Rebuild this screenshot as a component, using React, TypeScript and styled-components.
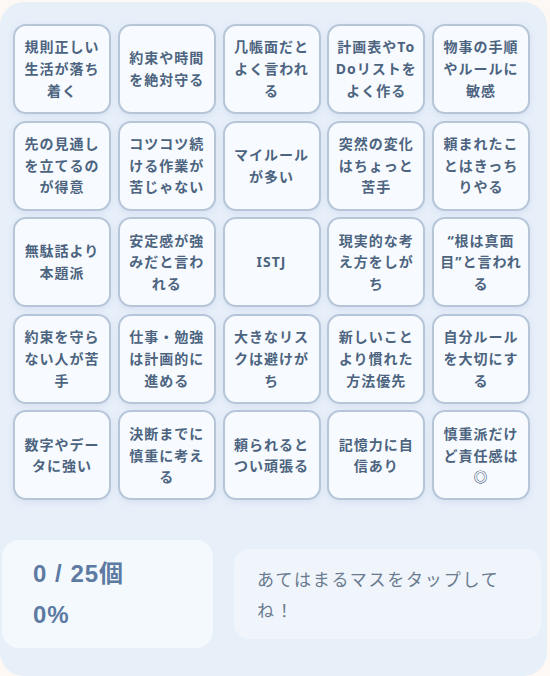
import styled, { createGlobalStyle } from "styled-components";

const GlobalStyle = createGlobalStyle`
  html, body {
    margin: 0;
    padding: 0;
    background: #fdf8f4;
  }
  body {
    font-family: "Noto Sans", "Noto Sans CJK JP", sans-serif;
  }
`

const Page = styled.div`
  padding-top: 2px;
`

const Board = styled.div`
  width: 547px;
  box-sizing: border-box;
  padding: 22px 0 28px 2px;
  background: #e7eff9;
  border-radius: 24px;
`

const Grid = styled.div`
  margin-left: 11px;
  width: 517px;
  display: grid;
  grid-template-columns: repeat(5, 1fr);
  grid-auto-rows: 90px;
  column-gap: 6.75px;
  row-gap: 6.6px;
`

const Cell = styled.button`
  box-sizing: border-box;
  display: flex;
  align-items: center;
  justify-content: center;
  padding: 0 4px;
  margin: 0;
  background: #f7fbff;
  border: 2px solid #b6c6d8;
  border-radius: 13px;
  box-shadow: 0 2px 6px rgba(110, 145, 190, 0.14);
  color: #4d6480;
  font-family: "Noto Sans", "Noto Sans CJK JP", sans-serif;
  font-size: 14px;
  font-weight: 700;
  letter-spacing: 1px;
  line-height: 21.7px;
  text-align: center;
  word-break: break-all;
  cursor: pointer;
`

const StatsRow = styled.div`
  margin-top: 40px;
  width: 539px;
  display: flex;
  align-items: center;
  gap: 21px;
`

const Counter = styled.div`
  box-sizing: border-box;
  width: 211px;
  height: 108px;
  padding: 13px 0 13px 31px;
  background: #f4f9fd;
  border-radius: 17px;
  color: #5c7aa2;
  font-family: "Liberation Sans", "Noto Sans CJK JP", sans-serif;
  font-size: 24px;
  font-weight: 700;
  letter-spacing: 1px;
  line-height: 41px;
`

const Hint = styled.div`
  box-sizing: border-box;
  flex: 1;
  height: 90px;
  padding: 14px 30px 0 23px;
  background: #eff5fb;
  border-radius: 15px;
  color: #6a7b8f;
  font-family: "Noto Sans CJK JP", sans-serif;
  font-size: 17px;
  letter-spacing: 1.8px;
  line-height: 31px;
`

const items = [
  "規則正しい生活が落ち着く",
  "約束や時間を絶対守る",
  "几帳面だとよく言われる",
  "計画表やToDoリストをよく作る",
  "物事の手順やルールに敏感",
  "先の見通しを立てるのが得意",
  "コツコツ続ける作業が苦じゃない",
  "マイルールが多い",
  "突然の変化はちょっと苦手",
  "頼まれたことはきっちりやる",
  "無駄話より本題派",
  "安定感が強みだと言われる",
  "ISTJ",
  "現実的な考え方をしがち",
  "“根は真面目”と言われる",
  "約束を守らない人が苦手",
  "仕事・勉強は計画的に進める",
  "大きなリスクは避けがち",
  "新しいことより慣れた方法優先",
  "自分ルールを大切にする",
  "数字やデータに強い",
  "決断までに慎重に考える",
  "頼られるとつい頑張る",
  "記憶力に自信あり",
  "慎重派だけど責任感は◎",
]

export default function App() {
  const checked = 0

  return (
    <Page>
      <GlobalStyle />
      <Board>
        <Grid>
          {items.map((text, i) => (
            <Cell key={i}>{text}</Cell>
          ))}
        </Grid>
        <StatsRow>
          <Counter>
            <div>{checked} / {items.length}個</div>
            <div>{Math.round((checked / items.length) * 100)}%</div>
          </Counter>
          <Hint>あてはまるマスをタップしてね！</Hint>
        </StatsRow>
      </Board>
    </Page>
  )
}
